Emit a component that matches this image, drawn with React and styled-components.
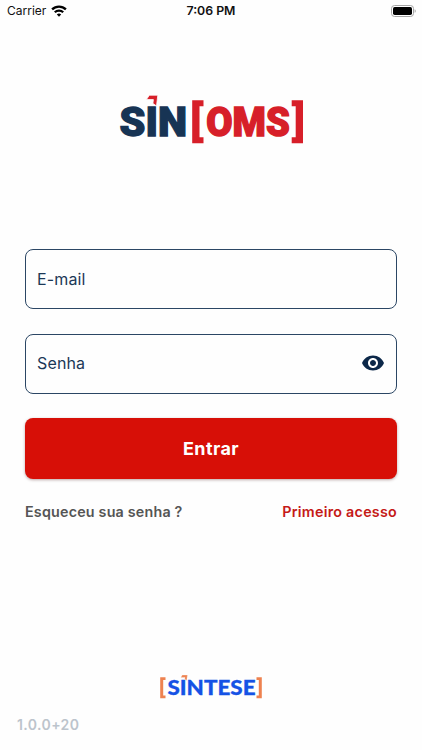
import React from "react";
import styled, { createGlobalStyle } from "styled-components";

const Global = createGlobalStyle`
  * { box-sizing: border-box; }
  body { margin: 0; background: #fff; font-family: Inter, "Liberation Sans", sans-serif; }
`;

const Screen = styled.main`
  width: 422px;
  height: 750px;
  display: flex;
  flex-direction: column;
  background: #fefefe;
  overflow: hidden;
`;

const StatusBar = styled.header`
  height: 22px;
  flex: none;
  display: grid;
  grid-template-columns: 1fr auto 1fr;
  align-items: center;
  padding: 0 6px 0 7px;
  font-size: 12px;
  line-height: 22px;
  color: #111;
`;

const Carrier = styled.div`
  display: flex;
  align-items: center;
  gap: 5px;
`;

const Clock = styled.time`
  font-weight: 600;
  font-size: 12.3px;
  margin-right: 1px;
`;

const BatterySlot = styled.div`
  display: flex;
  justify-content: flex-end;
`;

const BrandArea = styled.div`
  height: 227px;
  flex: none;
  display: flex;
  justify-content: center;
  padding-top: 68px;
  svg { flex: none; }
`;

const Form = styled.form`
  display: flex;
  flex-direction: column;
  gap: 24.5px;
  padding: 0 25px;
`;

const Field = styled.label`
  height: 60px;
  display: flex;
  align-items: center;
  justify-content: space-between;
  padding: 0 11px 1px 11px;
  border: 1.4px solid #2b4664;
  border-radius: 8px;
  font-size: 16px;
  letter-spacing: 0.15px;
  color: #1c3857;
`;

const SubmitButton = styled.button`
  height: 61px;
  border: 0;
  border-radius: 8px;
  padding: 0;
  background: #d70f07;
  box-shadow: 0 1px 3px rgba(60, 0, 0, 0.35);
  color: #fff;
  font: 700 18px Inter, sans-serif;
  letter-spacing: 0.4px;
`;

const Links = styled.nav`
  display: flex;
  justify-content: space-between;
  font-size: 14.3px;
  font-weight: 600;
  line-height: 18px;
  margin-top: -0.5px;
`;

const TextLink = styled.a`
  color: ${(p) => p.$color};
  letter-spacing: ${(p) => p.$spacing};
`;

const Footer = styled.footer`
  margin-top: auto;
  display: flex;
  flex-direction: column;
  align-items: center;
  gap: 15px;
  padding: 0 17px 16px;
`;

const Version = styled.span`
  align-self: flex-start;
  font-size: 14px;
  font-weight: 600;
  line-height: 18px;
  letter-spacing: 0.4px;
  color: #bcc4cc;
`;

const Letters = styled.text`
  font-family: ${(p) => p.$font}, sans-serif;
  font-weight: 900;
  font-size: ${(p) => p.$size}px;
  fill: ${(p) => p.$color};
  stroke: ${(p) => p.$color};
  stroke-width: ${(p) => p.$weight}px;
`;

const Wifi = () => (
  <svg width="16" height="12" viewBox="0 0 16 12" fill="none" stroke="#000" strokeWidth="2.3">
    <path d="M1.1 4.4a9.8 9.8 0 0 1 13.8 0" />
    <path d="M3.8 7.3a6 6 0 0 1 8.4 0" />
    <path d="M8 11.7 5.8 9.5a3.2 3.2 0 0 1 4.4 0Z" fill="#000" stroke="none" />
  </svg>
);

const Battery = () => (
  <svg width="25" height="12" viewBox="0 0 25 12">
    <rect x=".5" y=".5" width="22" height="11" rx="3" fill="#fff" stroke="#a5a5a5" />
    <rect x="2" y="2" width="19" height="8" rx="1.7" />
    <path d="M23.7 4.2c1.3.5 1.3 3.1 0 3.6Z" fill="#999" />
  </svg>
);

const Eye = () => (
  <svg width="24" height="24" viewBox="0 0 24 24" fill="#0c2849">
    <path d="M12 4.5C7 4.5 2.73 7.61 1 12c1.73 4.39 6 7.5 11 7.5s9.27-3.11 11-7.5c-1.73-4.39-6-7.5-11-7.5zM12 17c-2.76 0-5-2.24-5-5s2.24-5 5-5 5 2.24 5 5-2.24 5-5 5zm0-8c-1.66 0-3 1.34-3 3s1.34 3 3 3 3-1.34 3-3-1.34-3-3-3z" />
  </svg>
);

const SinOmsLogo = () => (
  <svg width="190" height="60" viewBox="116 90 190 60">
    <Letters $font="Roboto" $size={41.5} $color="#173454" $weight={1.3} x="119.6" y="136.2" textLength="67.5" lengthAdjust="spacingAndGlyphs">SIN</Letters>
    <Letters $font="Roboto" $size={41.5} $color="#d71f29" $weight={1.5} x="206.3" y="136.2" textLength="83.5" lengthAdjust="spacingAndGlyphs">OMS</Letters>
    <path d="M149.3 95.2h8.5l-1.3 10.8-3.6-2.6 .5-3.8h-7z" fill="#d71f29" stroke="#fefefe" strokeWidth=".8" />
    <g fill="#d71f29">
      <path d="M192.2 100.3h11.3v6h-4v31h4v6h-11.3z" />
      <path d="M303 100.3h-11.3v6h4v31h-4v6h11.3z" />
    </g>
  </svg>
);

const SinteseLogo = () => (
  <svg width="104" height="28" viewBox="159 673 104 28">
    <Letters $font="Lato" $size={20} $color="#1552e5" $weight={0.3} x="167.5" y="695.3" textLength="88" lengthAdjust="spacingAndGlyphs">SINTESE</Letters>
    <path d="M182.2 675h5.3l-.8 5.4-2-1.2.3-1.8h-4.2z" fill="#ee8250" stroke="#fefefe" strokeWidth=".3" />
    <g fill="#ee8250">
      <path d="M160.2 677.2h5.3v2.7h-2.3v15.6h2.3v2.7h-5.3z" />
      <path d="M261.8 677.2h-5.3v2.7h2.3v15.6h-2.3v2.7h5.3z" />
    </g>
  </svg>
);

export default function App() {
  return (
    <Screen>
      <Global />
      <StatusBar>
        <Carrier>Carrier <Wifi /></Carrier>
        <Clock>7:06 PM</Clock>
        <BatterySlot><Battery /></BatterySlot>
      </StatusBar>
      <BrandArea><SinOmsLogo /></BrandArea>
      <Form>
        <Field>E-mail</Field>
        <Field>Senha <Eye /></Field>
        <SubmitButton type="button">Entrar</SubmitButton>
        <Links>
          <TextLink $color="#555" $spacing="0.2px">Esqueceu sua senha ?</TextLink>
          <TextLink $color="#c51a17" $spacing="0.25px">Primeiro acesso</TextLink>
        </Links>
      </Form>
      <Footer>
        <SinteseLogo />
        <Version>1.0.0+20</Version>
      </Footer>
    </Screen>
  );
}
